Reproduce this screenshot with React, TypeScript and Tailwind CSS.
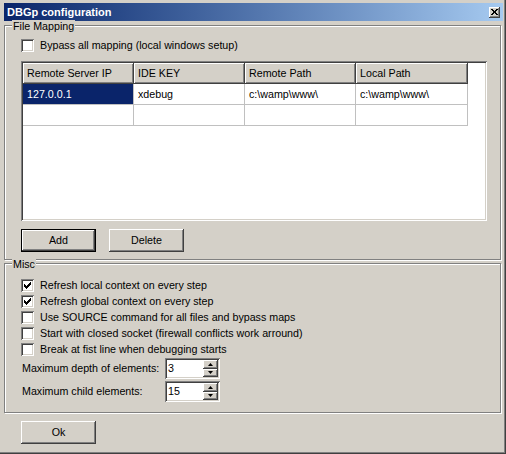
import React from 'react';

const raised =
  'shadow-[inset_-1px_-1px_0_#404040,inset_1px_1px_0_#ffffff,inset_-2px_-2px_0_#808080,inset_2px_2px_0_#d4d0c8]';
const sunken =
  'shadow-[inset_1px_1px_0_#808080,inset_-1px_-1px_0_#ffffff,inset_2px_2px_0_#404040,inset_-2px_-2px_0_#d4d0c8]';

const CheckMark = () => (
  <svg width="7" height="7" viewBox="0 0 7 7" shapeRendering="crispEdges">
    <rect x="6" y="0" width="1" height="1" fill="#000" />
    <rect x="5" y="1" width="2" height="1" fill="#000" />
    <rect x="0" y="2" width="1" height="1" fill="#000" />
    <rect x="4" y="2" width="3" height="1" fill="#000" />
    <rect x="0" y="3" width="2" height="1" fill="#000" />
    <rect x="3" y="3" width="3" height="1" fill="#000" />
    <rect x="0" y="4" width="5" height="1" fill="#000" />
    <rect x="1" y="5" width="3" height="1" fill="#000" />
    <rect x="2" y="6" width="1" height="1" fill="#000" />
  </svg>
);

const Checkbox: React.FC<{ label: string; checked?: boolean }> = ({ label, checked }) => (
  <div className="flex items-center h-[13px] gap-[6px]">
    <div className={`w-[13px] h-[13px] bg-white flex items-center justify-center ${sunken}`}>
      {checked && <CheckMark />}
    </div>
    <span className="whitespace-nowrap">{label}</span>
  </div>
);

const Button: React.FC<{ label: string; isDefault?: boolean }> = ({ label, isDefault }) => (
  <div
    className={`w-[75px] h-[23px] flex items-center justify-center ${
      isDefault
        ? 'border border-black shadow-[inset_-1px_-1px_0_#404040,inset_1px_1px_0_#ffffff,inset_-2px_-2px_0_#808080]'
        : raised
    }`}
  >
    {label}
  </div>
);

const Spinner: React.FC<{ value: string }> = ({ value }) => (
  <div className={`w-[55px] h-[21px] bg-white flex items-center justify-between pl-[3px] pr-[2px] ${sunken}`}>
    <span>{value}</span>
    <div className="flex flex-col w-[15px] h-[17px]">
      <div className={`flex-1 bg-[#d4d0c8] flex items-center justify-center ${raised}`}>
        <svg width="5" height="3" viewBox="0 0 5 3">
          <path d="M2.5 0 L5 3 L0 3 Z" fill="#000" />
        </svg>
      </div>
      <div className={`flex-1 bg-[#d4d0c8] flex items-center justify-center ${raised}`}>
        <svg width="5" height="3" viewBox="0 0 5 3">
          <path d="M0 0 L5 0 L2.5 3 Z" fill="#000" />
        </svg>
      </div>
    </div>
  </div>
);

const GroupBox: React.FC<{ title: string; className: string; children: React.ReactNode }> = ({
  title,
  className,
  children,
}) => (
  <div
    className={`relative w-[497px] border border-[#808080] shadow-[inset_1px_1px_0_#ffffff,1px_1px_0_#ffffff] ${className}`}
  >
    <span className="absolute left-[7px] top-[-6px] px-[1px] bg-[#d4d0c8] leading-[12px]">{title}</span>
    {children}
  </div>
);

const columns = [
  { name: 'Remote Server IP', w: 'w-[111px]' },
  { name: 'IDE KEY', w: 'w-[111px]' },
  { name: 'Remote Path', w: 'w-[111px]' },
  { name: 'Local Path', w: 'w-[112px]' },
];

const rows = [
  ['127.0.0.1', 'xdebug', 'c:\\wamp\\www\\', 'c:\\wamp\\www\\'],
  ['', '', '', ''],
];

export default function App() {
  return (
    <div className="w-[506px] h-[454px] bg-[#d4d0c8] font-['Liberation_Sans',Arial,sans-serif] text-[10.7px] leading-none text-black shadow-[inset_-1px_-1px_0_#404040,inset_-2px_-2px_0_#808080] pl-[4px] pt-[3px] overflow-hidden">
      {/* title bar */}
      <div className="w-[499px] h-[18px] flex items-center justify-between bg-linear-to-r from-[#0a246a] to-[#a6caf0] pl-[3px] pr-[3px]">
        <span className="text-white font-bold text-[11px]">DBGp configuration</span>
        <div className={`w-[11px] h-[11px] bg-[#d4d0c8] flex items-center justify-center ${raised}`}>
          <svg width="7" height="6" viewBox="0 0 7 6" shapeRendering="crispEdges">
            <path d="M0.5 0 L6.5 6 M6.5 0 L0.5 6" stroke="#000" strokeWidth="1.3" />
          </svg>
        </div>
      </div>

      <GroupBox title="File Mapping" className="mt-[4px] h-[235px] pl-[16px] pt-[13px]">
        <Checkbox label="Bypass all mapping (local windows setup)" />

        {/* list view */}
        <div className={`mt-[9px] w-[466px] h-[160px] bg-white p-[2px] ${sunken}`}>
          <div className="flex">
            {columns.map((c) => (
              <div
                key={c.name}
                className={`${c.w} h-[21px] bg-[#d4d0c8] flex items-center pl-[4px] shadow-[inset_-1px_-1px_0_#404040,inset_1px_1px_0_#ffffff,inset_-2px_-2px_0_#808080]`}
              >
                {c.name}
              </div>
            ))}
          </div>
          {rows.map((r, i) => (
            <div key={i} className="flex">
              {r.map((v, j) => (
                <div
                  key={j}
                  className={`${columns[j].w} h-[21px] flex items-center pl-[4px] border-r border-b border-[#c0c0c0] ${
                    i === 0 && j === 0 ? 'bg-[#0a246a] text-white' : ''
                  }`}
                >
                  {v}
                </div>
              ))}
            </div>
          ))}
        </div>

        <div className="mt-[8px] flex gap-[13px]">
          <Button label="Add" isDefault />
          <Button label="Delete" />
        </div>
      </GroupBox>

      <GroupBox title="Misc" className="mt-[3px] h-[150px] pl-[16px] pt-[15px]">
        <div className="flex flex-col gap-[3px]">
          <Checkbox label="Refresh local context on every step" checked />
          <Checkbox label="Refresh global context on every step" checked />
          <Checkbox label="Use SOURCE command for all files and bypass maps" />
          <Checkbox label="Start with closed socket (firewall conflicts work arround)" />
          <Checkbox label="Break at fist line when debugging starts" />
        </div>
        <div className="mt-[2px] flex flex-col gap-[2px] pl-[1px]">
          <div className="flex items-center h-[21px]">
            <span className="w-[143px]">Maximum depth of elements:</span>
            <Spinner value="3" />
          </div>
          <div className="flex items-center h-[21px]">
            <span className="w-[143px]">Maximum child elements:</span>
            <Spinner value="15" />
          </div>
        </div>
      </GroupBox>

      <div className="mt-[8px] ml-[17px]">
        <Button label="Ok" />
      </div>
    </div>
  );
}
